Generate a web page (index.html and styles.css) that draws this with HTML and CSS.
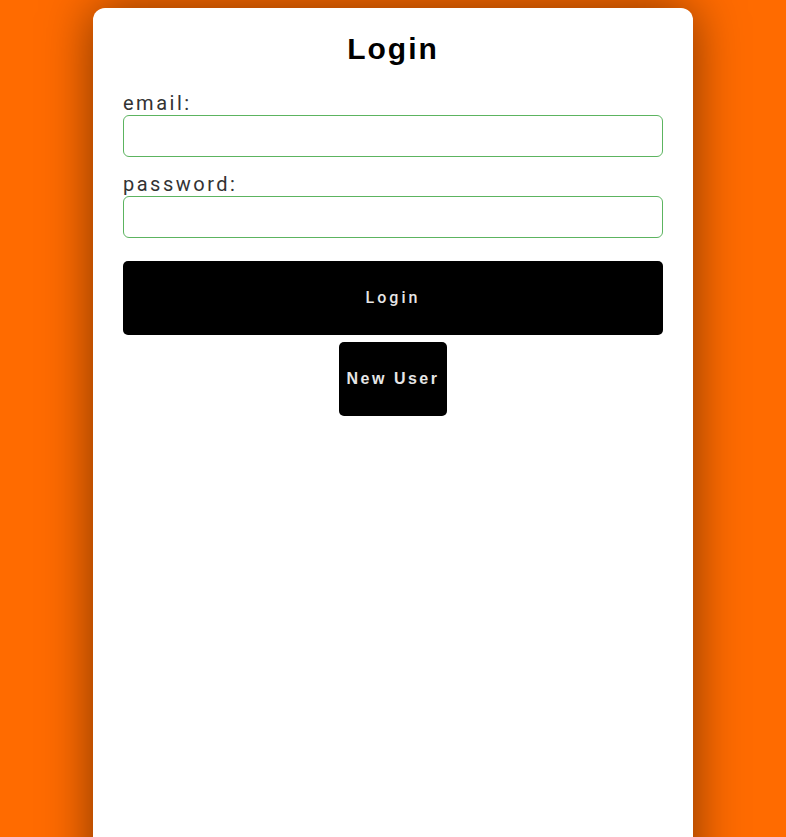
FILE: index.html
```html
<!DOCTYPE html>
<html>
<head>
<meta charset="utf-8">
<link rel="stylesheet" href="styles.css">
</head>
<body>
<div class="card">
  <h1 class="title">Login</h1>
  <form class="form">
    <label class="label" for="email">email:</label>
    <input class="input" id="email" type="text">
    <label class="label" for="password">password:</label>
    <input class="input" id="password" type="password">
    <button class="btn btn-login" type="button">Login</button>
    <button class="btn btn-new" type="button">New User</button>
  </form>
</div>
</body>
</html>
```

FILE: styles.css
```css
html {
  background: #ff6b00;
  height: 100%;
  overflow: hidden;
}
body {
  margin: 0;
  padding: 8px 0 0;
  height: 100%;
  box-sizing: border-box;
}
.card {
  width: 600px;
  height: 900px;
  margin: 0 auto;
  background: #fff;
  border-radius: 12px;
  box-shadow: 0 0 50px rgba(0, 0, 0, 0.5);
  padding: 23px 30px;
  box-sizing: border-box;
}
.title {
  margin: 0 0 26px;
  font-family: "Liberation Sans", Arial, sans-serif;
  font-size: 30px;
  line-height: 35px;
  font-weight: bold;
  letter-spacing: 2px;
  text-align: center;
  color: #000;
}
.form {
  display: flex;
  flex-direction: column;
}
.label {
  font-family: Roboto, sans-serif;
  font-size: 20px;
  line-height: 23px;
  letter-spacing: 2.5px;
  color: #333;
}
.input {
  height: 42px;
  box-sizing: border-box;
  margin: 0 0 16px;
  border: 1px solid #5cb460;
  border-radius: 6px;
  padding: 0 10px;
  outline: none;
}
.input + .label + .input {
  margin-bottom: 23px;
}
.btn {
  border: none;
  border-radius: 5px;
  background: #000;
  color: #e6e6e6;
  font-size: 16px;
  line-height: 18px;
  padding: 28px 8px;
  cursor: pointer;
  white-space: nowrap;
}
.btn-login {
  font-family: Roboto, sans-serif;
  font-weight: 500;
  letter-spacing: 3px;
}
.btn-new {
  align-self: center;
  margin-top: 7px;
  font-family: "Liberation Sans", Arial, sans-serif;
  font-weight: bold;
  letter-spacing: 2.5px;
}
```
